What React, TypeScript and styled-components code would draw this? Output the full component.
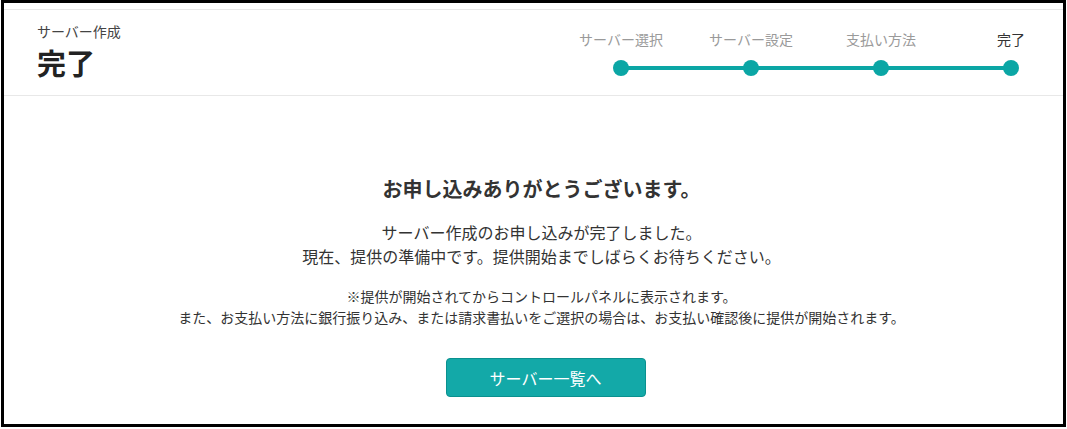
import React from "react";
import styled, { createGlobalStyle } from "styled-components";

const GlobalStyle = createGlobalStyle`
  html, body {
    margin: 0;
    padding: 0;
    background: #fff;
  }
  body {
    font-family: "Noto Sans CJK JP", "Noto Sans", sans-serif;
    color: #333;
  }
`;

const teal = "#0ba6a5";

const Frame = styled.div`
  box-sizing: border-box;
  margin-left: 1px;
  width: 1065px;
  height: 427px;
  border: 3px solid #000;
  padding-top: 6px;
  background: #fff;
  display: flex;
  flex-direction: column;
`;

const Header = styled.header`
  box-sizing: border-box;
  height: 87px;
  border-top: 1px solid #e8e8e8;
  border-bottom: 1px solid #e8e8e8;
  display: flex;
  justify-content: space-between;
  padding-left: 33px;
  padding-right: 10px;
`;

const TitleBlock = styled.div`
  padding-top: 14px;
  display: flex;
  flex-direction: column;
`;

const SubTitle = styled.div`
  font-size: 14px;
  line-height: 14px;
  color: #444;
`;

const Title = styled.h1`
  margin: 10px 0 0;
  font-size: 29px;
  line-height: 28px;
  font-weight: 700;
  color: #222;
`;

const Steps = styled.ol`
  list-style: none;
  margin: 0;
  padding: 20px 0 0;
  display: flex;
  gap: 46px;
`;

const Step = styled.li<{ $current?: boolean; $last?: boolean }>`
  position: relative;
  width: 84px;
  display: flex;
  flex-direction: column;
  align-items: center;
  font-size: 14px;
  line-height: 18px;
  color: ${(p) => (p.$current ? "#333" : "#9a9a9a")};
  white-space: nowrap;

  &::after {
    content: "";
    display: ${(p) => (p.$last ? "none" : "block")};
    position: absolute;
    left: 42px;
    top: 36px;
    width: 130px;
    height: 4px;
    background: ${teal};
  }
`;

const Dot = styled.span`
  position: relative;
  z-index: 1;
  margin-top: 12px;
  width: 16px;
  height: 16px;
  border-radius: 50%;
  background: ${teal};
`;

const Main = styled.main`
  flex: 1;
  display: flex;
  flex-direction: column;
  align-items: center;
  padding: 79px 0 0 16px;
  text-align: center;
`;

const Heading = styled.h2`
  margin: 0;
  font-size: 20px;
  line-height: 28px;
  font-weight: 700;
  color: #333;
`;

const Message = styled.p`
  margin: 17px 0 0;
  font-size: 16px;
  line-height: 24px;
  color: #333;
`;

const Note = styled.p`
  margin: 18px 0 0;
  font-size: 14px;
  line-height: 21px;
  color: #333;
`;

const Button = styled.button`
  margin: 30px 0 0 8px;
  box-sizing: border-box;
  width: 200px;
  height: 39px;
  border: 1px solid #0a918f;
  border-radius: 4px;
  background: #13a9a8;
  color: #fff;
  font-family: inherit;
  font-size: 16px;
  cursor: pointer;
`;

const steps = ["サーバー選択", "サーバー設定", "支払い方法", "完了"];

export default function App() {
  return (
    <>
      <GlobalStyle />
      <Frame>
        <Header>
          <TitleBlock>
            <SubTitle>サーバー作成</SubTitle>
            <Title>完了</Title>
          </TitleBlock>
          <Steps>
            {steps.map((s, i) => (
              <Step
                key={s}
                $current={i === steps.length - 1}
                $last={i === steps.length - 1}
              >
                {s}
                <Dot />
              </Step>
            ))}
          </Steps>
        </Header>
        <Main>
          <Heading>お申し込みありがとうございます。</Heading>
          <Message>
            サーバー作成のお申し込みが完了しました。
            <br />
            現在、提供の準備中です。提供開始までしばらくお待ちください。
          </Message>
          <Note>
            ※提供が開始されてからコントロールパネルに表示されます。
            <br />
            また、お支払い方法に銀行振り込み、または請求書払いをご選択の場合は、お支払い確認後に提供が開始されます。
          </Note>
          <Button>サーバー一覧へ</Button>
        </Main>
      </Frame>
    </>
  );
}
